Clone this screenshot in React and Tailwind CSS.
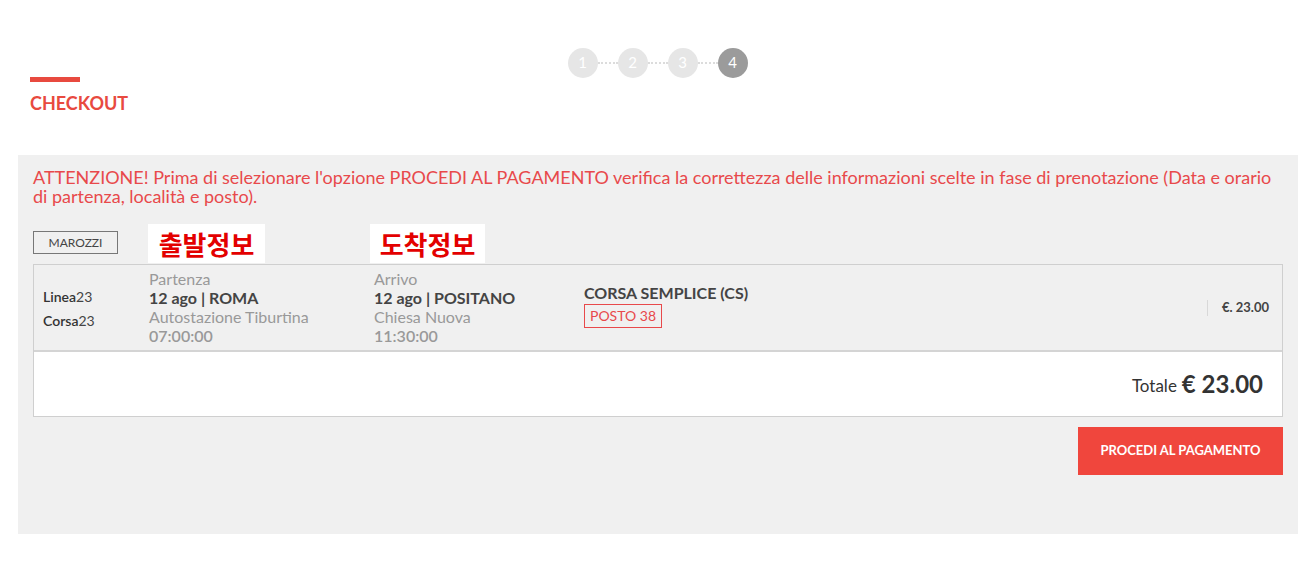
import React from "react";

const font = { fontFamily: "Lato, 'Noto Sans', sans-serif" };

function Steps() {
  const steps = [1, 2, 3, 4];
  return (
    <div className="flex justify-center items-center pt-[48px] h-[77px]">
      {steps.map((s, i) => (
        <React.Fragment key={s}>
          {i > 0 && (
            <div className="w-[20px] border-t-2 border-dotted border-[#dcdcdc]" />
          )}
          <div
            className={`w-[30px] h-[30px] rounded-full flex items-center justify-center text-white text-[15px] ${
              s === 4 ? "bg-[#9b9b9b]" : "bg-[#e6e6e6]"
            }`}
          >
            {s}
          </div>
        </React.Fragment>
      ))}
    </div>
  );
}

export default function App() {
  return (
    <div className="w-[1315px] h-[573px] bg-white overflow-hidden" style={font}>
      <Steps />
      <div className="pl-[30px]">
        <div className="w-[50px] h-[5px] bg-[#e84a3f]" />
        <div className="mt-[10px] text-[18px] font-bold text-[#e84a3f] leading-[22px]">CHECKOUT</div>
      </div>

      <div className="mt-[41px] ml-[18px] w-[1280px] h-[379px] bg-[#f0f0f0] pt-[13px] px-[15px]">
        <p className="text-[18px] leading-[19px] text-[#e8494b]">
          ATTENZIONE! Prima di selezionare l'opzione PROCEDI AL PAGAMENTO verifica la correttezza delle informazioni scelte in fase di prenotazione (Data e orario di partenza, località e posto).
        </p>

        <div className="relative mt-[25px] h-[33px]">
          <div className="w-[85px] h-[23px] border border-[#777] flex items-center justify-center text-[12px] text-[#444]">
            MAROZZI
          </div>
          <div
            className="absolute left-[115px] top-[-7px] w-[117px] h-[39px] bg-white flex items-center justify-center text-[26px] font-bold text-[#e30000]"
            style={{ fontFamily: "'Noto Sans CJK KR', sans-serif" }}
          >
            출발정보
          </div>
          <div
            className="absolute left-[337px] top-[-7px] w-[115px] h-[39px] bg-white flex items-center justify-center text-[26px] font-bold text-[#e30000]"
            style={{ fontFamily: "'Noto Sans CJK KR', sans-serif" }}
          >
            도착정보
          </div>
        </div>

        <div className="border border-[#cfcfcf] w-[1250px]">
          <div className="h-[87px] flex items-center border-b-2 border-[#d4d4d4] text-[#444]">
            <div className="w-[115px] pl-[9px] text-[14px] leading-[24px] pt-[2px]">
              <div><span className="font-semibold text-[#333]">Linea</span>23</div>
              <div><span className="font-semibold text-[#333]">Corsa</span>23</div>
            </div>
            <div className="w-[225px] text-[16px] leading-[19px] -mt-[2px]">
              <div className="text-[#999]">Partenza</div>
              <div className="font-bold text-[#444]">12 ago | ROMA</div>
              <div className="text-[#999]">Autostazione Tiburtina</div>
              <div className="text-[#999] font-semibold">07:00:00</div>
            </div>
            <div className="w-[210px] text-[16px] leading-[19px] -mt-[2px]">
              <div className="text-[#999]">Arrivo</div>
              <div className="font-bold text-[#444]">12 ago | POSITANO</div>
              <div className="text-[#999]">Chiesa Nuova</div>
              <div className="text-[#999] font-semibold">11:30:00</div>
            </div>
            <div className="flex-1 -mt-[4px]">
              <div className="text-[16px] font-bold text-[#444] leading-[20px]">CORSA SEMPLICE (CS)</div>
              <div className="inline-block mt-[1px] border border-[#e8494b] text-[#e8494b] text-[14px] px-[5px] leading-[22px]">
                POSTO 38
              </div>
            </div>
            <div className="flex items-center pr-[13px]">
              <div className="w-px h-[16px] bg-[#d8d8d8] mr-[14px]" />
              <div className="text-[13px] font-bold text-[#444]">€. 23.00</div>
            </div>
          </div>
          <div className="h-[64px] bg-white flex items-center justify-end pr-[19px]">
            <span className="text-[17px] text-[#333] mt-[3px]">Totale</span>
            <span className="text-[24px] font-bold text-[#333] ml-[5px]">€ 23.00</span>
          </div>
        </div>

        <div className="flex justify-end mt-[10px] w-[1250px]">
          <button className="w-[205px] h-[48px] bg-[#f0463d] text-white text-[13px] font-bold">
            PROCEDI AL PAGAMENTO
          </button>
        </div>
      </div>
    </div>
  );
}
